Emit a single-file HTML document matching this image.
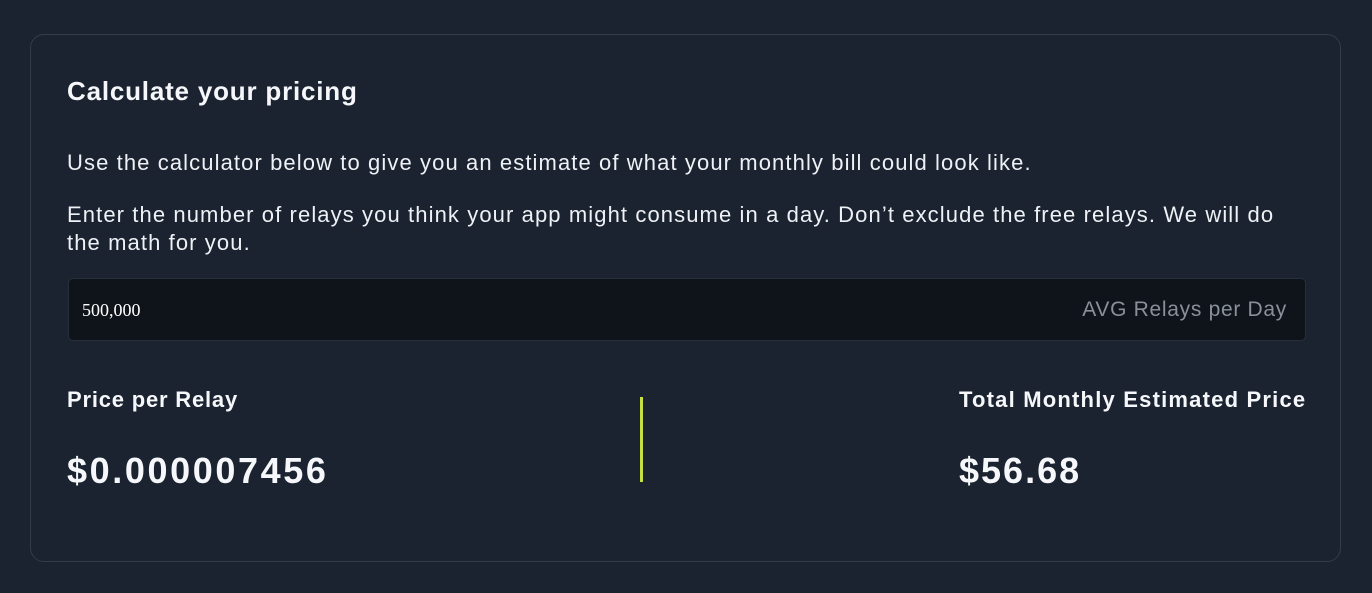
<!DOCTYPE html>
<html><head><meta charset="utf-8"><style>
html,body{margin:0;padding:0;}
body{width:1372px;height:593px;background:#1b2330;font-family:"Liberation Sans",sans-serif;color:#f5f7fa;position:relative;overflow:hidden;}
.card{position:absolute;left:30px;top:34px;width:1311px;height:528px;border:1px solid #323c4a;border-radius:14px;box-sizing:border-box;}
.t{position:absolute;left:67px;font-size:26px;font-weight:bold;top:76px;letter-spacing:0.8px;}
.p{position:absolute;left:67px;font-size:22px;line-height:28px;width:1215px;color:#eef1f5;letter-spacing:1.1px;}
.inp{position:absolute;left:68px;top:278px;width:1238px;height:63px;background:#0f131a;border:1px solid #262f3b;border-radius:5px;box-sizing:border-box;}
.v{position:absolute;left:13px;top:21px;font-family:"Liberation Serif",serif;font-size:18px;color:#fff;}
.ph{position:absolute;right:18px;top:19px;font-size:21px;color:#8a9099;letter-spacing:0.7px;}
.l{position:absolute;top:387px;font-size:22px;font-weight:bold;}
.n{position:absolute;top:450px;font-size:36px;font-weight:bold;letter-spacing:2.6px;}
.bar{position:absolute;left:640px;top:397px;width:3px;height:85px;background:#c5e043;}
</style></head><body>
<div class="card"></div>
<div class="t">Calculate your pricing</div>
<div class="p" style="top:149px">Use the calculator below to give you an estimate of what your monthly bill could look like.</div>
<div class="p" style="top:201px">Enter the number of relays you think your app might consume in a day. Don’t exclude the free relays. We will do the math for you.</div>
<div class="inp"><span class="v">500,000</span><span class="ph">AVG Relays per Day</span></div>
<div class="l" style="left:67px;letter-spacing:0.8px">Price per Relay</div>
<div class="n" style="left:67px">$0.000007456</div>
<div class="bar"></div>
<div class="l" style="left:959px;letter-spacing:1.2px">Total Monthly Estimated Price</div>
<div class="n" style="left:959px;letter-spacing:2px">$56.68</div>
</body></html>
